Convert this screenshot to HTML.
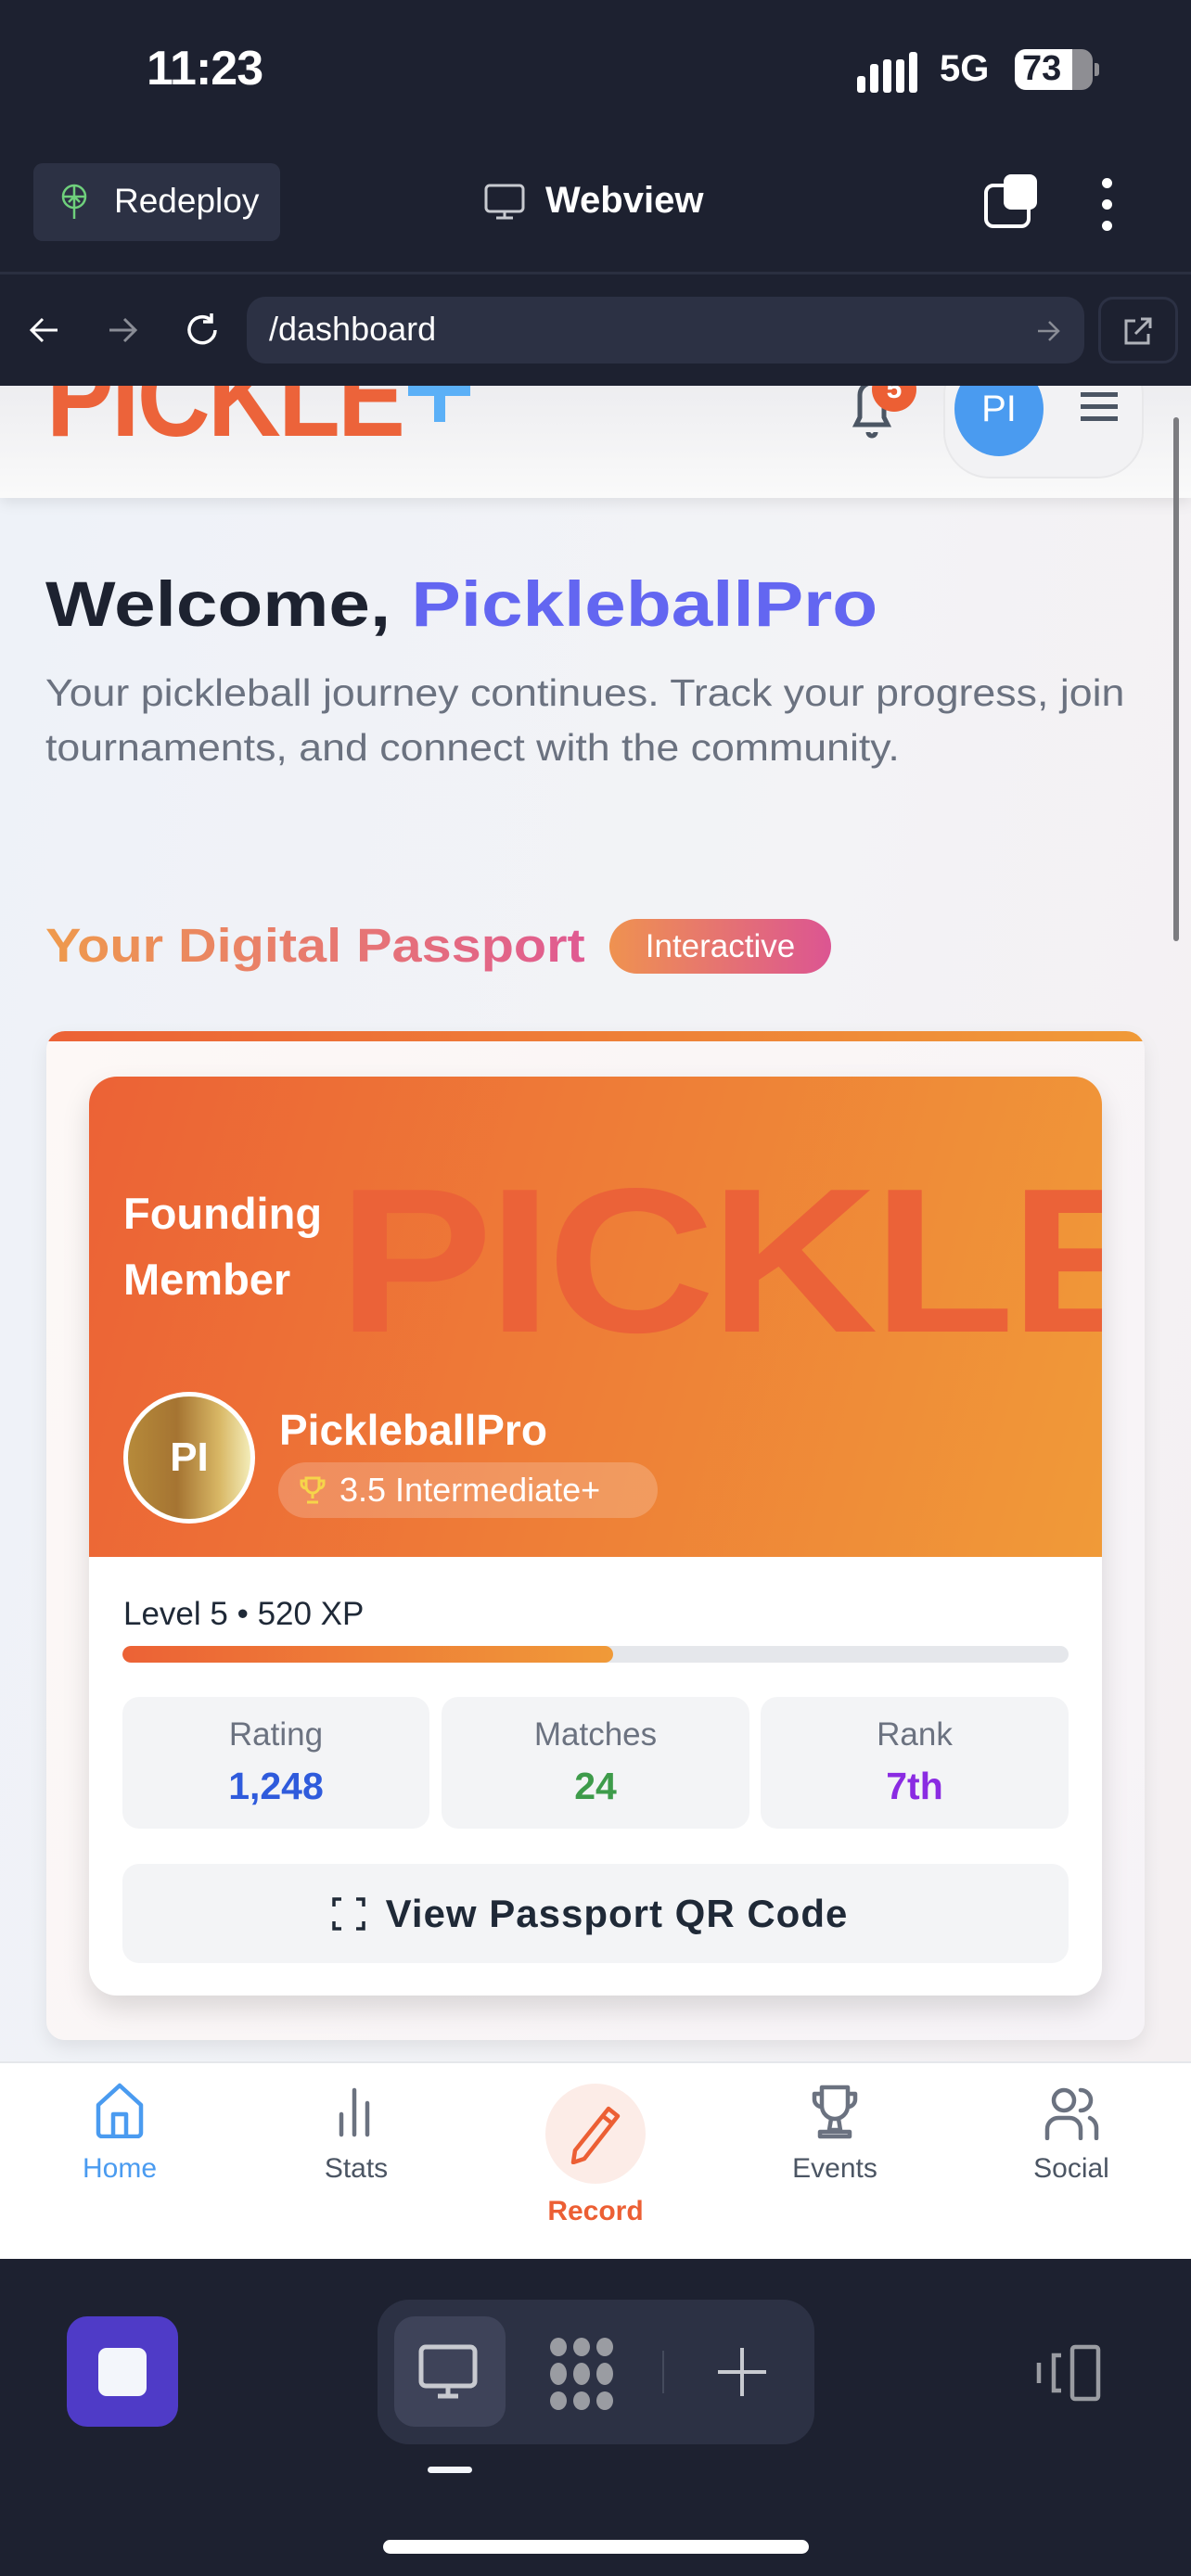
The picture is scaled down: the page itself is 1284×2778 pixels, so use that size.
<!DOCTYPE html>
<html><head><meta charset="utf-8"><style>
*{margin:0;padding:0;box-sizing:border-box}
body{width:1284px;height:2778px;overflow:hidden;background:#1d2130;font-family:"Liberation Sans",sans-serif;position:relative}
.abs{position:absolute}
</style></head><body>
<!-- status bar -->
<div class="abs" style="left:158px;top:44px;color:#fff;font-size:52px;font-weight:600;letter-spacing:-1px">11:23</div>
<div class="abs" style="left:924px;top:56px;display:flex;gap:5px;align-items:flex-end">
 <div style="width:9px;height:18px;background:#fff;border-radius:3px"></div><div style="width:9px;height:18px;background:#fff;border-radius:3px;box-shadow:0 -13px 0 #fff"></div><div style="width:9px;height:36px;background:#fff;border-radius:3px"></div><div style="width:9px;height:36px;background:#fff;border-radius:3px"></div><div style="width:9px;height:44px;background:#fff;border-radius:3px"></div>
</div>
<div class="abs" style="left:1013px;top:52px;color:#fff;font-size:40px;font-weight:600">5G</div>
<div class="abs" style="left:1094px;top:53px;width:84px;height:44px;border-radius:12px;background:#8e8e93;overflow:hidden"><div style="width:62px;height:44px;background:#fff"></div><div class="abs" style="left:8px;top:0;font-size:38px;font-weight:700;color:#1d2130">73</div></div>
<div class="abs" style="left:1180px;top:68px;width:5px;height:14px;background:#8e8e93;border-radius:0 3px 3px 0"></div>
<!-- toolbar -->
<div class="abs" style="left:36px;top:176px;width:266px;height:84px;background:#2c3144;border-radius:10px"></div>
<svg class="abs" style="left:64px;top:198px" width="32" height="38" viewBox="0 0 32 38" fill="none" stroke="#6fd07c" stroke-width="2.5"><circle cx="16" cy="14" r="12"/><path d="M4 14h24M16 2v36M10 20l6-6 6 6"/></svg>
<div class="abs" style="left:123px;top:196px;color:#fff;font-size:37px">Redeploy</div>
<svg class="abs" style="left:522px;top:198px" width="44" height="40" viewBox="0 0 44 40" fill="none" stroke="#c8cad0" stroke-width="3"><rect x="2" y="2" width="40" height="28" rx="4"/><path d="M22 30v7M13 37h18"/></svg>
<div class="abs" style="left:588px;top:194px;color:#fff;font-size:40px;font-weight:600">Webview</div>
<div class="abs" style="left:1061px;top:198px;width:50px;height:48px;border:4px solid #fff;border-radius:10px"></div>
<div class="abs" style="left:1082px;top:188px;width:36px;height:38px;background:#fff;border-radius:8px"></div>
<div class="abs" style="left:1188px;top:192px;width:11px;height:11px;background:#fff;border-radius:50%;box-shadow:0 23px 0 #fff,0 46px 0 #fff"></div>
<div class="abs" style="left:0;top:293px;width:1284px;height:3px;background:#2a2f40"></div>
<!-- url bar -->
<svg class="abs" style="left:30px;top:338px" width="36" height="36" viewBox="0 0 36 36" fill="none" stroke="#fff" stroke-width="3"><path d="M32 18H4M16 6L4 18l12 12"/></svg>
<svg class="abs" style="left:114px;top:338px" width="36" height="36" viewBox="0 0 36 36" fill="none" stroke="#8a8d96" stroke-width="3"><path d="M4 18h28M20 6l12 12-12 12"/></svg>
<svg class="abs" style="left:196px;top:334px" width="44" height="44" viewBox="0 0 44 44" fill="none" stroke="#fff" stroke-width="3.5"><path d="M36 22a14 14 0 1 1-5-11"/><path d="M32 4v9h-9"/></svg>
<div class="abs" style="left:266px;top:320px;width:903px;height:72px;background:#2c3144;border-radius:20px"></div>
<div class="abs" style="left:290px;top:334px;color:#fff;font-size:36px">/dashboard</div>
<svg class="abs" style="left:1116px;top:343px" width="28" height="28" viewBox="0 0 28 28" fill="none" stroke="#8a8d96" stroke-width="2.5"><path d="M3 14h22M15 4l10 10-10 10"/></svg>
<div class="abs" style="left:1184px;top:320px;width:86px;height:72px;border:3px solid #2c3144;border-radius:16px"></div>
<svg class="abs" style="left:1210px;top:340px" width="34" height="34" viewBox="0 0 34 34" fill="none" stroke="#b0b3ba" stroke-width="3"><path d="M14 6H4v24h24V20M20 4h10v10M30 4L14 20"/></svg>
<!-- page -->
<div class="abs" style="left:0;top:416px;width:1284px;height:1807px;background:linear-gradient(100deg,#eef2f8,#f3f3f6 60%,#f4f0f2);overflow:hidden">
 <div class="abs" style="left:0;top:0;width:1284px;height:121px;background:linear-gradient(#ededf0,#fafafa);box-shadow:0 6px 14px rgba(0,0,0,.08)"></div>
 <div class="abs" style="left:50px;top:-50px;color:#ec633a;font-size:124px;font-weight:900;letter-spacing:-3px;line-height:124px;white-space:nowrap;transform:scaleX(.88);transform-origin:left top">PICKLE</div>
 <div class="abs" style="left:440px;top:0;width:67px;height:11px;background:#5bb0f7"></div>
 <div class="abs" style="left:468px;top:0;width:12px;height:39px;background:#5bb0f7"></div>
 <svg class="abs" style="left:915px;top:-10px" width="50" height="70" viewBox="0 0 50 70" fill="none" stroke="#4b5563" stroke-width="5"><path d="M8 52h34l-4-8V20a13 13 0 0 0-26 0v24z"/><path d="M21 60a4 4 0 0 0 8 0"/></svg>
 <div class="abs" style="left:940px;top:-20px;width:48px;height:48px;border-radius:50%;background:#ec5f34;color:#fff;font-size:30px;font-weight:700;text-align:center;line-height:48px">5</div>
 <div class="abs" style="left:1017px;top:-40px;width:216px;height:140px;border-radius:50px;background:#f2f2f4;border:2px solid #e8e8ea"></div>
 <div class="abs" style="left:1029px;top:-26px;width:96px;height:102px;border-radius:50%;background:#4a9bf0;color:#fff;font-size:40px;text-align:center;line-height:102px">PI</div>
 <div class="abs" style="left:1165px;top:7px;width:40px;height:5px;background:#4b5563;box-shadow:0 13px 0 #4b5563,0 26px 0 #4b5563"></div>
 <div class="abs" style="left:1265px;top:34px;width:6px;height:565px;background:#7c7c80;border-radius:3px"></div>

 <div class="abs" style="left:49px;top:196px;font-size:69px;font-weight:700;color:#1d2230;white-space:nowrap;transform:scaleX(1.16);transform-origin:left top">Welcome, <span style="color:#6366f1">PickleballPro</span></div>
 <div class="abs" style="left:49px;top:302px;width:1125px;font-size:41px;line-height:59px;color:#6b7280;transform:scaleX(1.09);transform-origin:left top">Your pickleball journey continues. Track your progress, join tournaments, and connect with the community.</div>
 <div class="abs" style="left:49px;top:574px;font-size:51px;font-weight:700;white-space:nowrap;line-height:60px;background:linear-gradient(90deg,#ef9a4c,#e05a92);-webkit-background-clip:text;background-clip:text;color:transparent;transform:scaleX(1.13);transform-origin:left top">Your Digital Passport</div>
 <div class="abs" style="left:657px;top:575px;width:239px;height:59px;border-radius:30px;background:linear-gradient(90deg,#ef9250,#dc5592);color:#fff;font-size:35px;text-align:center;line-height:59px">Interactive</div>

 <div class="abs" style="left:50px;top:696px;width:1184px;height:1088px;border-radius:20px;background:linear-gradient(120deg,#fdf8f6,#f6f3f7);box-shadow:0 8px 20px rgba(0,0,0,.08);overflow:hidden">
  <div style="height:11px;background:linear-gradient(90deg,#ec6236,#f09a38)"></div>
 </div>
 <div class="abs" style="left:96px;top:745px;width:1092px;height:991px;border-radius:30px;background:#fff;box-shadow:0 14px 30px rgba(0,0,0,.13);overflow:hidden">
  <div class="abs" style="left:0;top:0;width:1092px;height:518px;background:linear-gradient(105deg,#ec6236,#f09a38);overflow:hidden">
   <div class="abs" style="left:268px;top:88px;font-size:222px;font-weight:900;color:#eb6238;letter-spacing:-5px;white-space:nowrap;line-height:222px;transform:scaleX(1.13);transform-origin:left top">PICKLE</div>
   <div class="abs" style="left:37px;top:112px;color:#fff;font-size:47px;font-weight:700;line-height:71px">Founding<br>Member</div>
   <div class="abs" style="left:37px;top:340px;width:142px;height:142px;border-radius:50%;border:5px solid #fff;background:linear-gradient(90deg,#b68a3a,#a57432 40%,#d9b866 75%,#f3ecb8);color:#fff;font-size:44px;font-weight:700;text-align:center;line-height:132px">PI</div>
   <div class="abs" style="left:205px;top:354px;color:#fff;font-size:46px;font-weight:700">PickleballPro</div>
   <div class="abs" style="left:204px;top:416px;width:409px;height:60px;border-radius:30px;background:rgba(255,255,255,.2);color:#fff;font-size:36px;line-height:60px;padding-left:66px">3.5 Intermediate+</div>
   <svg class="abs" style="left:226px;top:430px" width="30" height="32" viewBox="0 0 30 32" fill="none" stroke="#f6d54a" stroke-width="3"><path d="M8 3h14v9a7 7 0 0 1-14 0zM8 6H3v3a5 5 0 0 0 5 5M22 6h5v3a5 5 0 0 1-5 5M15 19v6M9 29h12"/></svg>
  </div>
  <div class="abs" style="left:37px;top:560px;font-size:35px;color:#1f2937">Level 5 • 520 XP</div>
  <div class="abs" style="left:36px;top:614px;width:1020px;height:18px;border-radius:9px;background:#e5e7eb;overflow:hidden"><div style="width:529px;height:18px;border-radius:9px;background:linear-gradient(90deg,#ec6236,#f09a38)"></div></div>
  <div class="abs" style="left:36px;top:669px;width:331px;height:142px;border-radius:18px;background:#f3f4f6;text-align:center"><div style="margin-top:20px;font-size:35px;line-height:42px;color:#6b7280">Rating</div><div style="margin-top:10px;font-size:41px;line-height:48px;font-weight:700;color:#2f5bdc">1,248</div></div>
  <div class="abs" style="left:380px;top:669px;width:332px;height:142px;border-radius:18px;background:#f3f4f6;text-align:center"><div style="margin-top:20px;font-size:35px;line-height:42px;color:#6b7280">Matches</div><div style="margin-top:10px;font-size:41px;line-height:48px;font-weight:700;color:#3d9b4a">24</div></div>
  <div class="abs" style="left:724px;top:669px;width:332px;height:142px;border-radius:18px;background:#f3f4f6;text-align:center"><div style="margin-top:20px;font-size:35px;line-height:42px;color:#6b7280">Rank</div><div style="margin-top:10px;font-size:41px;line-height:48px;font-weight:700;color:#8a2be2">7th</div></div>
  <div class="abs" style="left:36px;top:849px;width:1020px;height:107px;border-radius:18px;background:#f3f4f6;text-align:center;line-height:107px;font-size:42px;font-weight:600;color:#1f2937;padding-left:46px;letter-spacing:1px">View Passport QR Code</div>
  <svg class="abs" style="left:262px;top:885px" width="36" height="36" viewBox="0 0 36 36" fill="none" stroke="#1f2937" stroke-width="3.5"><path d="M2 10V2h8M26 2h8v8M34 26v8h-8M10 34H2v-8"/></svg>
 </div>
</div>
<!-- bottom nav -->
<div class="abs" style="left:0;top:2223px;width:1284px;height:213px;background:#fff;border-top:2px solid #e5e7eb"></div>
<svg class="abs" style="left:102px;top:2246px" width="54" height="60" viewBox="0 0 54 60" fill="none" stroke="#4a9bf0" stroke-width="4.5" stroke-linejoin="round"><path d="M4 24L27 3l23 21v30a4 4 0 0 1-4 4H8a4 4 0 0 1-4-4z"/><path d="M20 58V34h14v24"/></svg>
<div class="abs" style="left:80px;top:2322px;width:98px;text-align:center;color:#4a9bf0;font-size:30px">Home</div>
<svg class="abs" style="left:362px;top:2250px" width="44" height="56" viewBox="0 0 44 56" fill="none" stroke="#6b7280" stroke-width="4.5" stroke-linecap="round"><path d="M6 52V30M20 52V4M34 52V18"/></svg>
<div class="abs" style="left:334px;top:2322px;width:100px;text-align:center;color:#4b5563;font-size:30px">Stats</div>
<div class="abs" style="left:588px;top:2247px;width:108px;height:108px;border-radius:50%;background:#fcece7"></div>
<svg class="abs" style="left:612px;top:2270px" width="60" height="64" viewBox="0 0 60 64" fill="none" stroke="#ec5f34" stroke-width="4.5" stroke-linejoin="round"><path d="M44 4l10 8-36 46-12 4 2-13z"/><path d="M38 12l10 8"/></svg>
<div class="abs" style="left:572px;top:2368px;width:140px;text-align:center;color:#ec5f34;font-size:30px;font-weight:700">Record</div>
<svg class="abs" style="left:870px;top:2248px" width="60" height="60" viewBox="0 0 60 60" fill="none" stroke="#6b7280" stroke-width="4.5" stroke-linejoin="round"><path d="M16 3h28v20a14 14 0 0 1-28 0zM16 10H8v6a8 8 0 0 0 8 8M44 10h8v6a8 8 0 0 1-8 8M26 37l-2 12h12l-2-12M14 56h32v-5H14z"/></svg>
<div class="abs" style="left:840px;top:2322px;width:120px;text-align:center;color:#4b5563;font-size:30px">Events</div>
<svg class="abs" style="left:1125px;top:2250px" width="62" height="58" viewBox="0 0 62 58" fill="none" stroke="#6b7280" stroke-width="4.5" stroke-linecap="round"><circle cx="22" cy="15" r="11"/><path d="M4 56V46a12 12 0 0 1 12-12h12a12 12 0 0 1 12 12v10M40 4a11 11 0 0 1 0 22M50 34a12 12 0 0 1 7 11v11"/></svg>
<div class="abs" style="left:1100px;top:2322px;width:110px;text-align:center;color:#4b5563;font-size:30px">Social</div>
<!-- bottom dark bar -->
<div class="abs" style="left:72px;top:2498px;width:120px;height:119px;border-radius:22px;background:#4f3bc7"></div>
<div class="abs" style="left:106px;top:2532px;width:52px;height:52px;border-radius:9px;background:#f3f6fb"></div>
<div class="abs" style="left:407px;top:2480px;width:471px;height:156px;border-radius:34px;background:#2c3144"></div>
<div class="abs" style="left:425px;top:2498px;width:120px;height:119px;border-radius:22px;background:#3e4359"></div>
<svg class="abs" style="left:450px;top:2528px" width="70" height="62" viewBox="0 0 70 62" fill="none" stroke="#c8cad0" stroke-width="5"><rect x="4" y="3" width="58" height="42" rx="5"/><path d="M33 45v10M22 56h22"/></svg>
<svg class="abs" style="left:590px;top:2521px" width="74" height="78" viewBox="0 0 74 78" fill="#9a9ca2"><ellipse cx="12" cy="10" rx="9" ry="10"/><ellipse cx="37" cy="10" rx="9" ry="10"/><ellipse cx="62" cy="10" rx="9" ry="10"/><ellipse cx="12" cy="39" rx="9" ry="12"/><ellipse cx="37" cy="39" rx="9" ry="12"/><ellipse cx="62" cy="39" rx="9" ry="12"/><ellipse cx="12" cy="68" rx="9" ry="10"/><ellipse cx="37" cy="68" rx="9" ry="10"/><ellipse cx="62" cy="68" rx="9" ry="10"/></svg>
<div class="abs" style="left:714px;top:2535px;width:2px;height:46px;background:#444a5c"></div>
<svg class="abs" style="left:772px;top:2530px" width="56" height="56" viewBox="0 0 56 56" fill="none" stroke="#c8cad0" stroke-width="4"><path d="M28 2v52M2 28h52"/></svg>
<div class="abs" style="left:461px;top:2660px;width:48px;height:7px;border-radius:4px;background:#f3f6fb"></div>
<svg class="abs" style="left:1116px;top:2528px" width="72" height="62" viewBox="0 0 72 62" fill="none" stroke="#9a9ca2" stroke-width="4.5"><rect x="40" y="3" width="28" height="56" rx="3"/><path d="M28 12h-8v38h8M4 20v22"/></svg>
<div class="abs" style="left:413px;top:2739px;width:459px;height:15px;border-radius:8px;background:#fff"></div>
</body></html>
